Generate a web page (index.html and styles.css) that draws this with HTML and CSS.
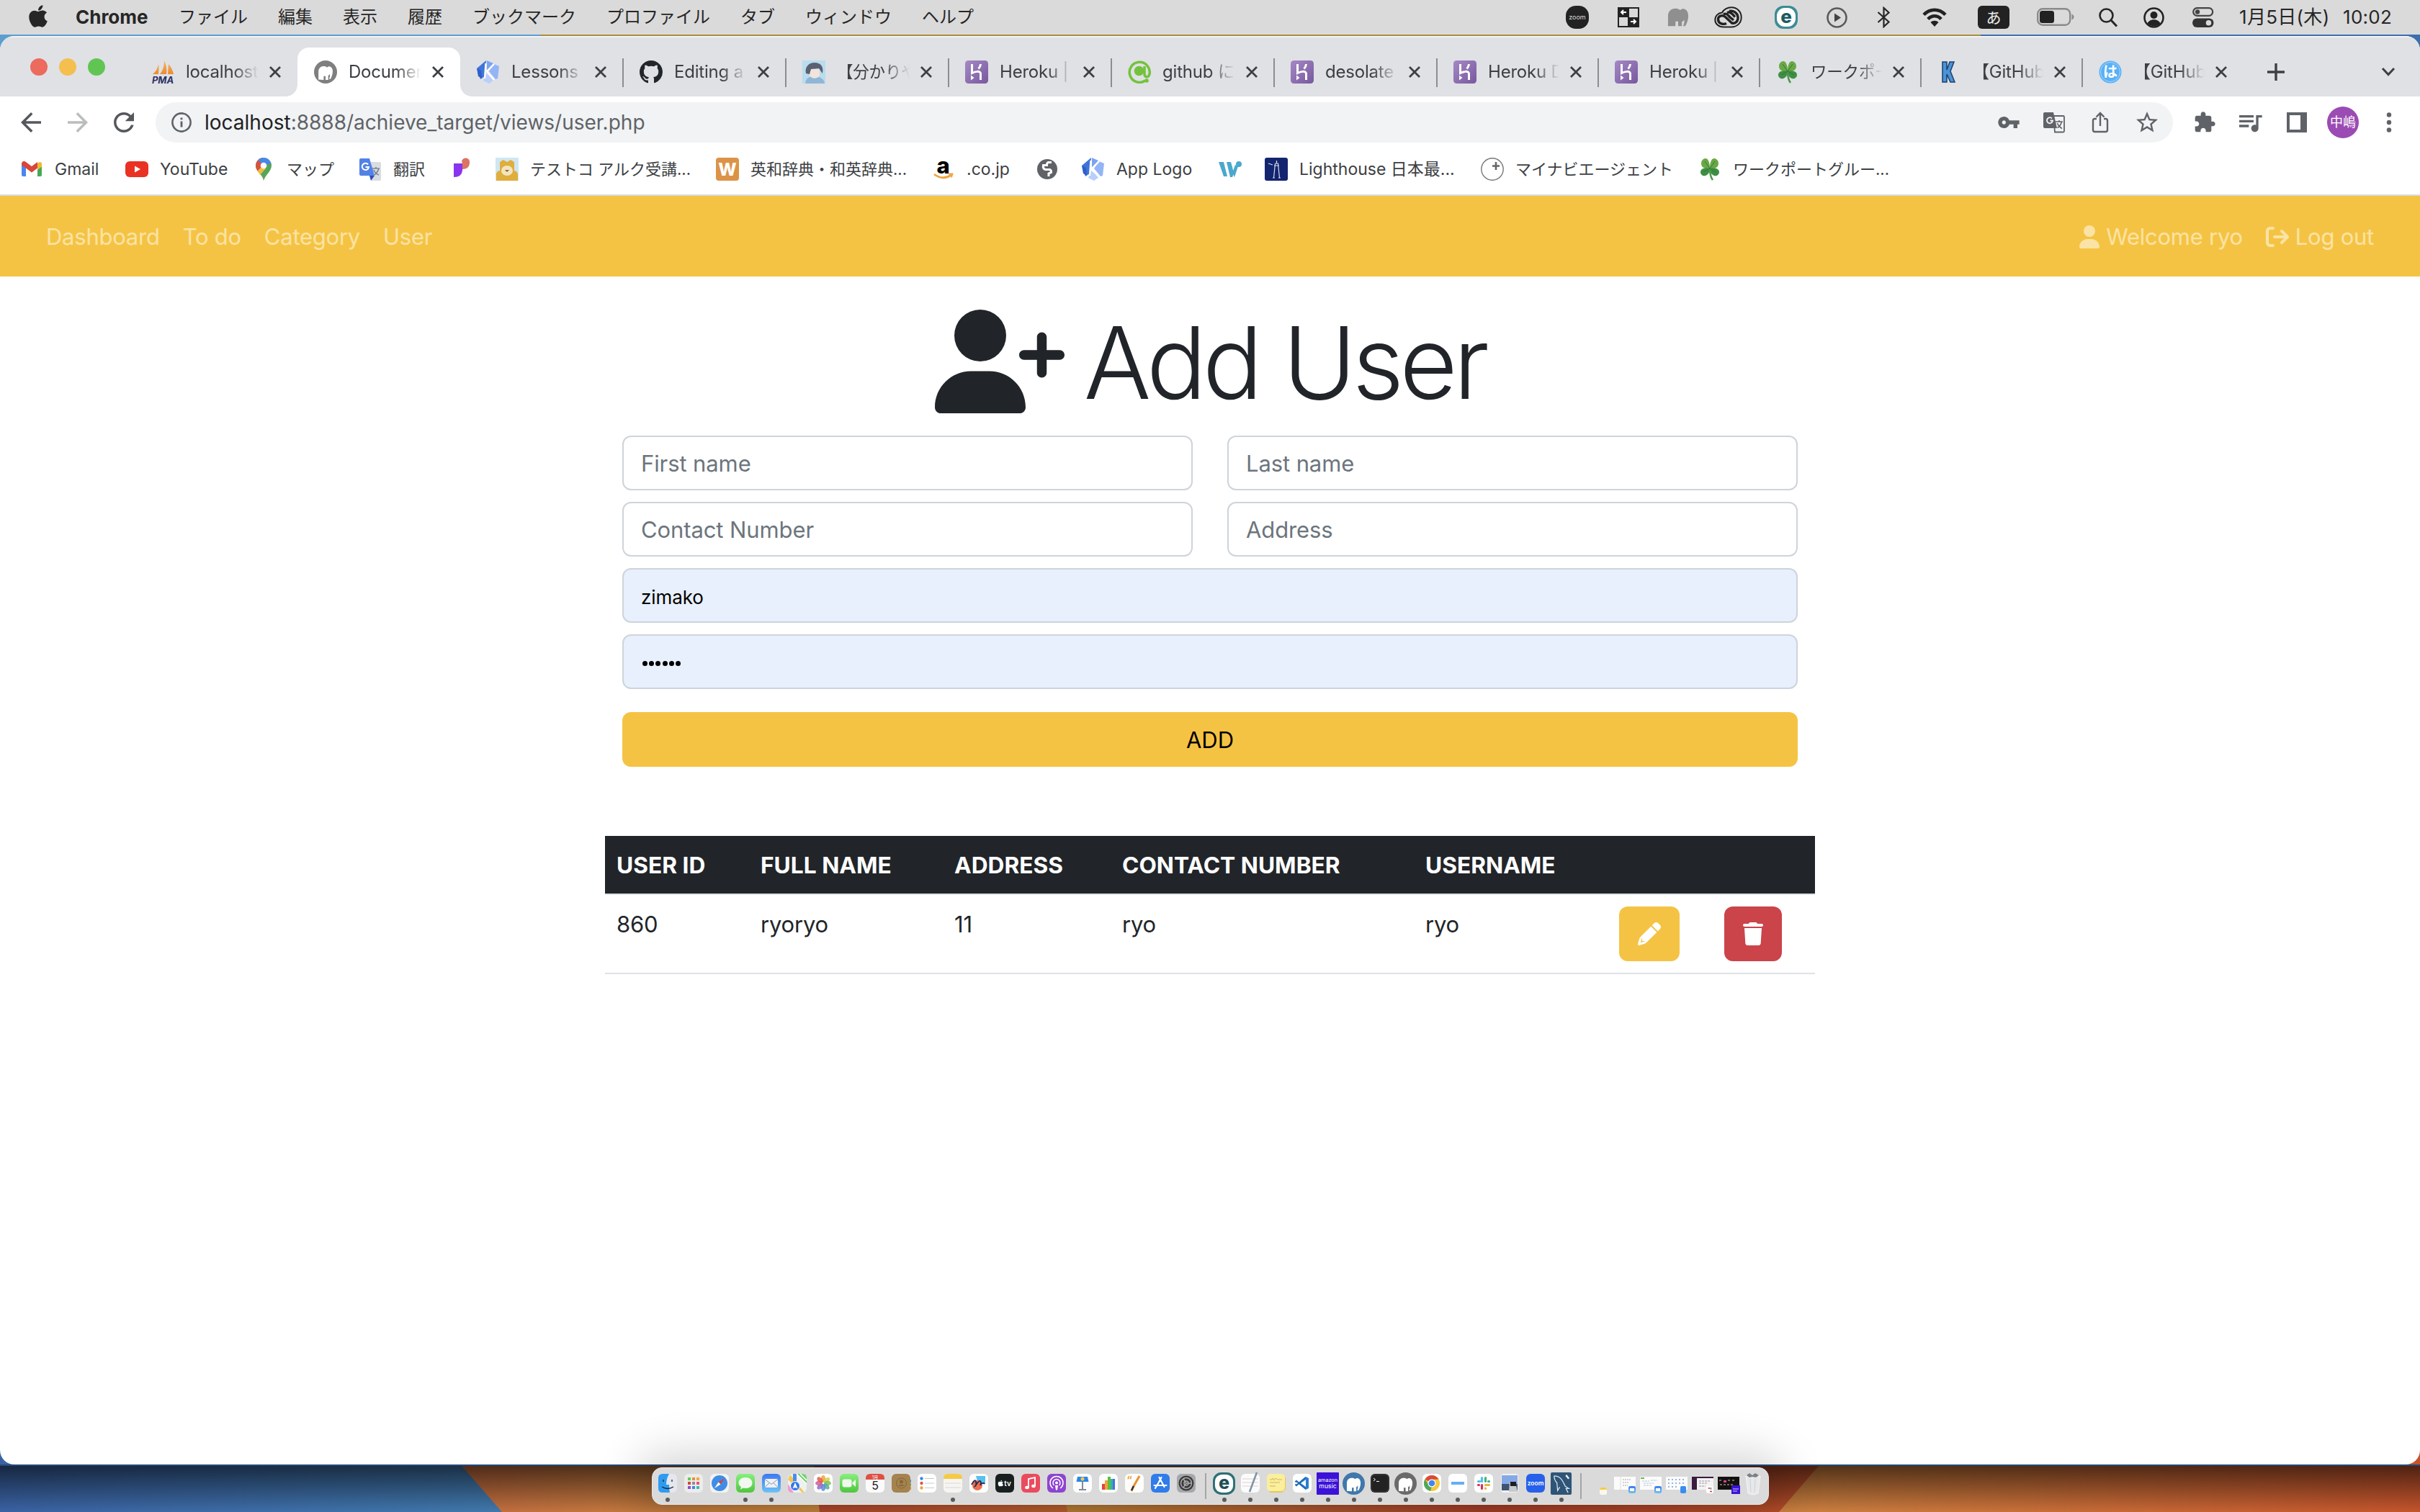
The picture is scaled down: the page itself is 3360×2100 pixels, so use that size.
FILE: index.html
```html
<!DOCTYPE html>
<html lang="ja">
<head>
<meta charset="utf-8">
<title>Document</title>
<link rel="stylesheet" href="styles.css">
</head>
<body>
<svg class="defs" width="0" height="0">
  <defs>
    <linearGradient id="gHeroku" x1="0" y1="0" x2="1" y2="1"><stop offset="0" stop-color="#a489c4"/><stop offset="1" stop-color="#79589f"/></linearGradient>
    <linearGradient id="gGreen" x1="0" y1="0" x2="0" y2="1"><stop offset="0" stop-color="#86f07c"/><stop offset="1" stop-color="#4fc53f"/></linearGradient>
    <linearGradient id="gBlue" x1="0" y1="0" x2="0" y2="1"><stop offset="0" stop-color="#3d78f0"/><stop offset="1" stop-color="#6cc4f5"/></linearGradient>
    <linearGradient id="gSail" x1="0" y1="0" x2="0" y2="1"><stop offset="0" stop-color="#f3b562"/><stop offset="1" stop-color="#ee8a2f"/></linearGradient>
    <symbol id="close" viewBox="0 0 18 18"><path d="M2 2l14 14M16 2L2 16" stroke="#3c4043" stroke-width="2.800" fill="none"/></symbol>
    <symbol id="heroku" viewBox="0 0 32 32"><rect width="32" height="32" rx="4.500" fill="url(#gHeroku)"/><path d="M9.500 5v12.500c4-2 12-4 12 1V27M21.500 5c-.2 3-1.500 5-3 6.500" stroke="#fff" stroke-width="3" fill="none"/><path d="M8 20.500l4.500 3.500L8 27.500z" fill="#fff"/></symbol>
    <symbol id="kicon" viewBox="0 0 32 32"><path d="M13 0L11 22 5 26 0 11z" fill="#3f74d8"/><path d="M0 11l6 3 1 11-5-3z" fill="#2c5fc9"/><path d="M14 0l9 4-9 10z" fill="#7ba4f0"/><path d="M24 5l7 3-2 17-3 1-9-11z" fill="#93b4f6"/><path d="M13 18l11 9-7 5-8-4z" fill="#b9cefb"/><path d="M12.500 4L11 25M24 5L14 15l10 12" stroke="#fff" stroke-width="2.400" fill="none"/></symbol>
    <symbol id="elephant" viewBox="0 0 32 32"><path d="M1 29V14C1 7 6 3 12 3c3.500 0 6 1 7 2.500C23 1.500 29 4 30.500 10c1.500 6-.5 13-4 19h-3c1.500-4 2-7 1.500-9.500-1 2-2 3-3.500 3V29H16v-7h-4v7z"/></symbol>
    <symbol id="mamp" viewBox="0 0 32 32"><circle cx="16" cy="16" r="16"/><g transform="translate(5.500 6) scale(.66)"><path fill="#fff" d="M1 31V14C1 7 6 3 12 3c3.500 0 6 1 7 2.500C23 1.500 29 4 30.500 10c1.500 6-.5 13-4 20h-3c1.500-4 2-8 1.500-10.500-1 2-2 3-3.500 3V32H16v-8h-4v8z"/></g></symbol>
    <symbol id="clover" viewBox="0 0 32 32"><path d="M16 15C10 16 4 14 4 8c0-4 3-7 6-7s6 4 6 14c0-10 3-14 6-14s6 3 6 7c0 6-6 8-12 7z" fill="#6aa845"/><path d="M16 15C10 13 3 15 3 20c0 4 4 6 7 5s6-4 6-10c0 6 3 9 6 10s7-1 7-5c0-5-7-7-13-5z" fill="#3f8f45"/><path d="M16 15c0 7 1 12 4 16" stroke="#4b9947" stroke-width="2.500" fill="none"/><path d="M16 15L9 5M16 15l7-10M16 15l-9 5M16 15l9 5" stroke="#2c7a38" stroke-width="1"/></symbol>
    <symbol id="apple" viewBox="0 0 384 512"><path d="M318.700 268.700c-.2-36.700 16.400-64.400 50-84.800-18.800-26.900-47.200-41.700-84.700-44.600-35.500-2.800-74.300 20.700-88.500 20.700-15 0-49.400-19.700-76.400-19.700C63.300 141.200 4 184.800 4 273.500q0 39.300 14.400 81.200c12.800 36.700 59 126.700 107.200 125.200 25.200-.6 43-17.900 75.800-17.900 31.800 0 48.300 17.900 76.400 17.900 48.600-.7 90.400-82.500 102.600-119.300-65.200-30.700-61.700-90-61.700-91.900zm-56.600-164.200c27.300-32.400 24.800-61.900 24-72.500-24.100 1.400-52 16.400-67.900 34.900-17.500 19.800-27.800 44.300-25.600 71.900 26.100 2 49.900-11.400 69.500-34.300z"/></symbol>
    <symbol id="miniMail" viewBox="0 0 10 10"><rect width="10" height="10" rx="2.500" fill="url(#gBlue)"/><rect x="2" y="3" width="6" height="4" fill="#fff"/></symbol>
  </defs>
</svg>
<div class="desktop">
  <svg class="wallpaper" viewBox="0 0 3360 2100" preserveAspectRatio="none">
    <defs>
      <linearGradient id="wBlue" x1="0" x2="1"><stop offset="0" stop-color="#3a62a3"/><stop offset="1" stop-color="#4179ad"/></linearGradient>
      <linearGradient id="wOr1" x1="0" x2="1"><stop offset="0" stop-color="#c2683f"/><stop offset="1" stop-color="#c78b3e"/></linearGradient>
      <linearGradient id="wRed" x1="0" x2="1"><stop offset="0" stop-color="#b3482c"/><stop offset="1" stop-color="#b8612f"/></linearGradient>
      <linearGradient id="wOr2" x1="0" x2="1"><stop offset="0" stop-color="#b98138"/><stop offset=".55" stop-color="#a53e27"/><stop offset="1" stop-color="#b9502a"/></linearGradient>
      <linearGradient id="wOr3" x1="0" x2="1"><stop offset="0" stop-color="#cc8140"/><stop offset="1" stop-color="#c4542c"/></linearGradient>
    </defs>
    <path d="M0 0h3360v100H0z" fill="#5b9fd0"/>
    <path d="M750 0h2000v60H750z" fill="#a98f3c"/>
    <path d="M2750 0h610v100h-610z" fill="#3c6fae"/>
    <path d="M0 1900h720v200H0z" fill="url(#wBlue)"/>
    <path d="M566 1950h624v150H697z" fill="url(#wOr1)"/>
    <path d="M1120 1950h380v150h-362z" fill="url(#wRed)"/>
    <path d="M1455 1950h1100v150H1482z" fill="url(#wOr2)"/>
    <path d="M2573 1980h787v120h-890z" fill="url(#wOr3)"/>
  </svg>

  <header class="menubar">
    <svg class="apple" fill="#262626"><use href="#apple"/></svg>
    <nav class="menus">
      <span class="menu app">Chrome</span><span class="menu">ファイル</span><span class="menu">編集</span><span class="menu">表示</span><span class="menu">履歴</span><span class="menu">ブックマーク</span><span class="menu">プロファイル</span><span class="menu">タブ</span><span class="menu">ウィンドウ</span><span class="menu">ヘルプ</span>
    </nav>
    <div class="status">
      <svg width="32" height="32" viewBox="0 0 32 32"><rect width="32" height="32" rx="14" fill="#222"/><text x="16" y="18.500" text-anchor="middle" font-size="9" fill="#ddd" class="glyph">zoom</text></svg>
      <svg width="30" height="28" viewBox="0 0 30 28"><rect x="1" y="1" width="28" height="26" fill="#222" stroke="#222" stroke-width="2"/><path d="M16 2h12v12H16zM2 14h12v12H2z" fill="#dadada"/><path d="M5 7h7M8 4L5 7l3 3M18 20h7M22 17l3 3-3 3" stroke="#fff" stroke-width="2" fill="none"/></svg>
      <svg width="32" height="30" fill="#8f8f8f"><use href="#elephant"/></svg>
      <svg width="39" height="30" viewBox="0 0 39 30"><path d="M13 28.500C6 28.500 1.300 24 1.300 18.500S5.500 9 11 8.500C14 3.500 19 1.300 24 1.300c8 0 13.700 6 13.700 13.700S32 28.500 24 28.500z" fill="none" stroke="#222" stroke-width="2"/><path d="M17 23.500c-4 2-11 .5-11.500-5s6-7.500 10-4l9 8.500c5 1.500 9-3 8.500-8C32.500 9 26.500 5 21 6.500M13 11c4-2.500 6 1 9 4l5 4M18 8.500c5-2 8 3 11 6" stroke="#222" stroke-width="3.400" fill="none"/></svg>
      <svg width="32" height="32" viewBox="0 0 32 32"><rect width="32" height="32" rx="12" fill="#3c8c95"/><rect x="3" y="3" width="26" height="26" rx="11" fill="#fff"/><text x="16" y="24" text-anchor="middle" font-size="26" font-weight="800" fill="#1e5a61" class="glyph">e</text></svg>
      <svg width="29" height="29" viewBox="0 0 29 29"><circle cx="14.500" cy="14.500" r="13" fill="none" stroke="#5a5a5a" stroke-width="2.600"/><path d="M11 8.500v12l9-6z" fill="#444"/></svg>
      <svg width="19" height="30" viewBox="0 0 19 30"><path d="M1.500 8l15 13.500L9.500 28V2l7 6.500L1.500 22" stroke="#262626" stroke-width="2.200" fill="none"/></svg>
      <svg width="34" height="26" viewBox="0 0 34 26"><g fill="none" stroke="#222" stroke-width="4.600"><path d="M2 9.500c8.500-9 21.500-9 30 0"/><path d="M7.800 15.500c5.500-5.600 13-5.600 18.400 0"/></g><path d="M17 26l-5.500-6c3-3 8-3 11 0z" fill="#222"/></svg>
      <svg width="44" height="32" viewBox="0 0 44 32"><rect width="44" height="32" rx="6" fill="#222"/><text x="22" y="24" text-anchor="middle" font-size="21" fill="#e8e8e8" class="glyph">あ</text></svg>
      <svg width="52" height="26" viewBox="0 0 52 26"><rect x="1.200" y="1.200" width="45" height="22.600" rx="7" fill="none" stroke="#8a8a8a" stroke-width="2.400"/><rect x="4" y="4" width="20" height="17" rx="3.500" fill="#222"/><path d="M48.500 8.500c4 1.500 4 6.500 0 8z" fill="#8a8a8a"/></svg>
      <svg width="27" height="27" viewBox="0 0 27 27"><circle cx="10.500" cy="10.500" r="9" fill="none" stroke="#262626" stroke-width="2.600"/><path d="M17 17l8 8.500" stroke="#262626" stroke-width="3"/></svg>
      <svg width="29" height="29" viewBox="0 0 29 29"><circle cx="14.500" cy="14.500" r="13" fill="none" stroke="#222" stroke-width="2.600"/><circle cx="14.500" cy="11" r="5" fill="#222"/><path d="M5.500 22.500c3-7 15-7 18 0-4 5-14 5-18 0z" fill="#222"/></svg>
      <svg width="30" height="28" viewBox="0 0 30 28"><rect x="1.200" y="1.200" width="27" height="10.600" rx="5.300" fill="none" stroke="#444" stroke-width="2.200"/><circle cx="7" cy="6.500" r="3.200" fill="#444"/><rect y="15.500" width="29.500" height="12.500" rx="6.200" fill="#333"/><circle cx="22.500" cy="21.700" r="3.800" fill="#dadada"/></svg>
      <span class="date">1月5日(木)</span>
      <span class="time">10:02</span>
    </div>
  </header>

  <main class="window">
    <div class="tabstrip">
      <div class="lights"><i class="red"></i><i class="yellow"></i><i class="green"></i></div>
      <div class="tab"><svg class="fav" viewBox="0 0 32 32"><path d="M2 19C7 15 9 10 10 5c1 5 0 10 0 14zM12 19C16 14 18 8 18 0c3 6 4 13 3 19zM23 19l1-14c4 5 6 9 7 14z" fill="url(#gSail)"/><text x="16" y="31.500" text-anchor="middle" font-size="13" font-weight="700" font-style="italic" fill="#2d3064" class="glyph">PMA</text></svg><span class="label">localhost</span><svg class="x"><use href="#close"/></svg></div>
      <div class="tab active"><svg class="fav" fill="#7f7f7f"><use href="#mamp"/></svg><span class="label">Document</span><svg class="x"><use href="#close"/></svg></div>
      <div class="tab"><svg class="fav"><use href="#kicon"/></svg><span class="label">Lessons</span><svg class="x"><use href="#close"/></svg></div>
      <div class="tab sep"><svg class="fav" viewBox="0 0 16 16"><path fill="#22262b" d="M8 0C3.580 0 0 3.580 0 8c0 3.540 2.290 6.530 5.470 7.590.4.070.55-.17.55-.38 0-.19-.01-.82-.01-1.490-2.010.37-2.530-.49-2.690-.94-.09-.23-.48-.94-.82-1.130-.28-.15-.68-.52-.01-.53.630-.01 1.080.58 1.230.82.720 1.210 1.870.87 2.330.66.070-.52.280-.87.510-1.070-1.780-.2-3.640-.89-3.640-3.950 0-.87.310-1.590.820-2.150-.08-.2-.36-1.020.080-2.120 0 0 .67-.21 2.200.82.640-.18 1.320-.27 2-.27s1.360.090 2 .27c1.530-1.040 2.200-.82 2.200-.82.440 1.100.160 1.920.080 2.120.510.560.820 1.270.820 2.150 0 3.070-1.870 3.750-3.650 3.950.290.250.540.730.540 1.480 0 1.070-.01 1.930-.01 2.200 0 .21.150.460.550.380A8.010 8.010 0 0 0 16 8c0-4.420-3.580-8-8-8z"/></svg><span class="label">Editing a</span><svg class="x"><use href="#close"/></svg></div>
      <div class="tab sep"><svg class="fav" viewBox="0 0 32 32"><path d="M0 0h32v32H0z" fill="#b9dcee"/><path d="M4 32c1-8 6-10 12-10s14 2 15 10z" fill="#8fb6d6"/><path d="M9 12h15v9c-3 5-11 5-14 0z" fill="#f2e3dc"/><path d="M5 18C3 9 9 3 17 3s13 5 11 15l-3-4-2-3-11 1-2 7z" fill="#5b6072"/></svg><span class="label ja">【分かりや</span><svg class="x"><use href="#close"/></svg></div>
      <div class="tab sep"><svg class="fav"><use href="#heroku"/></svg><span class="label">Heroku | L</span><svg class="x"><use href="#close"/></svg></div>
      <div class="tab sep"><svg class="fav" viewBox="0 0 32 32"><path d="M24 28a14 14 0 1 1 6-9c-2 6-7 4-7 0V8" stroke="#74c23b" stroke-width="3.500" fill="none"/><circle cx="15.500" cy="14.500" r="6.800" fill="#74c23b"/><circle cx="26" cy="28" r="2.800" fill="#74c23b"/></svg><span class="label">github に</span><svg class="x"><use href="#close"/></svg></div>
      <div class="tab sep"><svg class="fav"><use href="#heroku"/></svg><span class="label">desolate</span><svg class="x"><use href="#close"/></svg></div>
      <div class="tab sep n"><svg class="fav"><use href="#heroku"/></svg><span class="label">Heroku D</span><svg class="x"><use href="#close"/></svg></div>
      <div class="tab sep n"><svg class="fav"><use href="#heroku"/></svg><span class="label">Heroku | L</span><svg class="x"><use href="#close"/></svg></div>
      <div class="tab sep n"><svg class="fav"><use href="#clover"/></svg><span class="label ja">ワークポー</span><svg class="x"><use href="#close"/></svg></div>
      <div class="tab sep n"><svg class="fav" viewBox="0 0 32 32"><path d="M7 2h6v11l4-11h6l-5 13 6 15h-6l-5-11v11H7z" fill="#4a93d6" stroke="#1c3f6e" stroke-width="1.500"/></svg><span class="label">【GitHub</span><svg class="x"><use href="#close"/></svg></div>
      <div class="tab sep n"><svg class="fav" viewBox="0 0 32 32"><circle cx="16" cy="16" r="15.500" fill="#58b0f6"/><circle cx="16" cy="16" r="13.500" fill="none" stroke="#a9d6fb" stroke-width="1"/><text x="16" y="23" text-anchor="middle" font-size="20" font-weight="700" fill="#fff" class="glyph">は</text></svg><span class="label">【GitHub</span><svg class="x"><use href="#close"/></svg></div>
      <div class="newtab"><svg width="24" height="24" viewBox="0 0 24 24"><path d="M12 0v24M0 12h24" stroke="#3c4043" stroke-width="3.400"/></svg></div>
      <svg class="more" width="20" height="14" viewBox="0 0 20 14"><path d="M2 2l8 8.500L18 2" stroke="#3c4043" stroke-width="3" fill="none"/></svg>
    </div>

    <div class="toolbar">
      <svg class="tb back" viewBox="0 0 24 24"><path d="M20 11H7.830l5.590-5.590L12 4l-8 8 8 8 1.410-1.410L7.830 13H20v-2z"/></svg>
      <svg class="tb fwd" viewBox="0 0 24 24"><path d="M4 11h12.170l-5.590-5.590L12 4l8 8-8 8-1.410-1.410L16.170 13H4v-2z"/></svg>
      <svg class="tb reload" viewBox="0 0 24 24"><path d="M17.650 6.350C16.200 4.900 14.210 4 12 4c-4.420 0-7.990 3.580-7.990 8s3.570 8 7.990 8c3.730 0 6.840-2.550 7.730-6h-2.080c-.82 2.330-3.040 4-5.650 4-3.310 0-6-2.690-6-6s2.690-6 6-6c1.660 0 3.140.69 4.220 1.780L13 11h7V4l-2.350 2.350z"/></svg>
      <div class="omnibox">
        <svg width="28" height="28" viewBox="0 0 28 28"><circle cx="14" cy="14" r="12.600" fill="none" stroke="#5f6368" stroke-width="2.600"/><path d="M12.600 12.500h2.800v8h-2.800zM12.600 7.500h2.800v2.800h-2.800z" fill="#5f6368"/></svg>
        <span class="url"><b>localhost</b>:8888/achieve_target/views/user.php</span>
        <div class="omni-actions">
          <svg width="32" height="32" viewBox="0 0 24 24" fill="#5f6368"><path d="M12.650 10C11.830 7.670 9.610 6 7 6c-3.310 0-6 2.690-6 6s2.690 6 6 6c2.610 0 4.830-1.670 5.650-4H17v4h4v-4h2v-4H12.650zM7 14c-1.100 0-2-.9-2-2s.9-2 2-2 2 .9 2 2-.9 2-2 2z"/></svg>
          <svg width="30" height="30" viewBox="0 0 30 30"><path d="M14 6h13.500q1.500 0 1.500 1.500V27q0 1.500-1.500 1.500H16z" fill="none" stroke="#5f6368" stroke-width="1.800"/><path d="M2 1h12l5 22H2q-2 0-2-2V3q0-2 2-2z" fill="#5f6368"/><path d="M12 9.500a4 4 0 1 0 1 3H9.500" stroke="#f1f3f4" stroke-width="1.900" fill="none"/><path d="M17 14h10M22 12v2M25.500 14c-1 4-3 7-6 8.500M19.500 16c1 3 4 6 6.500 7.500" stroke="#5f6368" stroke-width="1.600" fill="none"/></svg>
          <svg width="24" height="30" viewBox="0 0 24 30"><path d="M7 10H4.500Q2 10 2 12.500v13Q2 28 4.500 28h15q2.500 0 2.500-2.500v-13Q22 10 19.500 10H17M12 20V3M6.500 7.500L12 2l5.500 5.500" stroke="#5f6368" stroke-width="2.400" fill="none"/></svg>
          <svg width="36" height="36" viewBox="0 0 24 24" fill="#5f6368"><path d="M22 9.240l-7.190-.62L12 2 9.190 8.630 2 9.240l5.460 4.730L5.820 21 12 17.270 18.180 21l-1.630-7.030L22 9.240zM12 15.400l-3.760 2.270 1-4.280-3.320-2.880 4.380-.38L12 6.100l1.710 4.040 4.380.38-3.320 2.880 1 4.280L12 15.400z"/></svg>
        </div>
      </div>
      <div class="actions">
        <svg width="32" height="32" viewBox="0 0 24 24" fill="#5f6368"><path d="M20.500 11H19V7c0-1.100-.9-2-2-2h-4V3.500C13 2.120 11.880 1 10.500 1S8 2.120 8 3.500V5H4c-1.100 0-1.990.9-1.990 2v3.800H3.500c1.490 0 2.700 1.210 2.700 2.700s-1.210 2.700-2.700 2.700H2V20c0 1.100.9 2 2 2h3.800v-1.500c0-1.490 1.210-2.700 2.700-2.700 1.490 0 2.700 1.210 2.700 2.700V22H17c1.100 0 2-.9 2-2v-4h1.500c1.380 0 2.500-1.120 2.500-2.500S21.880 11 20.500 11z"/></svg>
        <svg width="40" height="40" viewBox="0 0 24 24" fill="#5f6368"><path d="M15 6H3v2h12V6zm0 4H3v2h12v-2zM3 16h8v-2H3v2zM17 6v8.180c-.31-.11-.65-.18-1-.18-1.660 0-3 1.340-3 3s1.340 3 3 3 3-1.340 3-3V8h3V6h-5z"/></svg>
        <svg width="28" height="28" viewBox="0 0 28 28"><path fill="#5f6368" fill-rule="evenodd" d="M0 0h28v28H0zM4 4h15v20H4z"/></svg>
        <span class="avatar">中嶋</span>
        <svg width="8" height="28" viewBox="0 0 8 28" fill="#5f6368"><circle cx="4" cy="3.500" r="3.200"/><circle cx="4" cy="14" r="3.200"/><circle cx="4" cy="24.500" r="3.200"/></svg>
      </div>
    </div>

    <div class="bookmarks">
      <a><svg class="bi" viewBox="0 0 32 32"><path d="M2 7v17q0 2 2 2h4V13z" fill="#4b87ee"/><path d="M30 7v17q0 2-2 2h-4V13z" fill="#4aa757"/><path d="M24 8v9l6-4.500V8q-2-4-6 0z" fill="#f1b932"/><path d="M2 7.500Q4 3 8 6l8 6 8-6v8.500l-8 6-8-6-6-4z" fill="#d8473a"/></svg><span>Gmail</span></a>
      <a><svg class="bi" viewBox="0 0 32 32"><rect y="5" width="32" height="22" rx="6" fill="#e93223"/><path d="M13 11.500v9l8-4.500z" fill="#fff"/></svg><span>YouTube</span></a>
      <a><svg class="bi" viewBox="0 0 32 32"><path d="M16 32C15 24 5 20 5 11h11z" fill="#f0bd42"/><path d="M5 11a11 11 0 0 1 22 0c0 8-9 13-11 21 0-8-11-13-11-21z" fill="#54a65a"/><path d="M5 11A11 11 0 0 1 14 .2L16 11l-8 8Q5 15 5 11z" fill="#d95040"/><path d="M8 3.500A11 11 0 0 1 26.500 8L16 11z" fill="#4a86e8"/><path d="M8 18l9-9 2 6-8 9z" fill="#f0bd42"/><circle cx="16" cy="11" r="4.300" fill="#fff"/></svg><span class="ja">マップ</span></a>
      <a><svg class="bi" viewBox="0 0 32 32"><path d="M12 6h17q2 0 2 2v22q0 2-2 2H18z" fill="#d9dce0"/><path d="M3 1h12l7 24H3q-2 0-2-2V3q0-2 2-2z" fill="#5282e8"/><path d="M15 25h7l-5 7z" fill="#2d50b5"/><path d="M13 9.500a4.600 4.600 0 1 0 1 3.500H9.500" stroke="#fff" stroke-width="2" fill="none"/><path d="M19 15h10M24 13v2M28 15c-1 4-4 7-6 9M21 17c1 3 4 6 7 7" stroke="#7a8694" stroke-width="1.700" fill="none"/></svg><span class="ja">翻訳</span></a>
      <a><svg class="bi" viewBox="0 0 32 32"><path d="M5 8h12v10q-1 9-12 9z" fill="#8a34f0"/><path d="M16 5a5.500 5.500 0 0 1 11 2c0 5-3 9-10 9V8z" fill="#dd7266"/></svg></a>
      <a><svg class="bi" viewBox="0 0 32 32"><path d="M0 0h32v32H0z" fill="#cfe6f3"/><path d="M1 32V22q2-4 5-4V6l5-3 5 3 5-3 5 3v12q5 1 5 6v8z" fill="#dfae3c"/><ellipse cx="16" cy="18" rx="8" ry="7" fill="#f3e4c0"/><path d="M13 17h6l-3 3z" fill="#8a6a2a"/></svg><span class="ja">テストコ アルク受講...</span></a>
      <a><svg class="bi" viewBox="0 0 32 32"><rect width="32" height="32" rx="4" fill="#dc9347"/><text x="16" y="24.500" text-anchor="middle" font-size="24" font-weight="800" fill="#fff" class="glyph">W</text></svg><span class="ja">英和辞典・和英辞典...</span></a>
      <a><svg class="bi" viewBox="0 0 32 32"><text x="15.500" y="21.500" text-anchor="middle" font-size="31" font-weight="800" fill="#000" class="glyph">a</text><path d="M3 23q12 9 24 1" stroke="#f0a33c" stroke-width="2.800" fill="none"/><path d="M23 22.500l5.500 0-1.500 5" stroke="#f0a33c" stroke-width="1.800" fill="none"/></svg><span>.co.jp</span></a>
      <a><svg class="bi" viewBox="0 0 32 32"><circle cx="16" cy="16" r="14" fill="#5f6368"/><path d="M22 6.500h-4.500q-2 .5-2 4h-5q-1 5 3 6h6q2.500 1 2 4l-3.500 1.500v4" stroke="#fff" stroke-width="3" fill="none"/></svg></a>
      <a><svg class="bi"><use href="#kicon"/></svg><span>App Logo</span></a>
      <a><svg class="bi" viewBox="0 0 32 32"><path d="M0 6h7l5 20H7zM11 6h6l2 7 2 9-2 5h-3z" fill="#4ba8cc"/><path d="M19 21l4-11 4 2-5 15z" fill="#4ba8cc"/><circle cx="28" cy="9" r="4" fill="#4ba8cc"/></svg></a>
      <a><svg class="bi" viewBox="0 0 32 32"><rect width="32" height="32" rx="3" fill="#14256f"/><path d="M14.500 8h4l2 20M14.500 8l-2 20M13 11h7M16.500 4v4M11 28h3M19 28h3M5 8l6 2" stroke="#d9deee" stroke-width="1.200" fill="none"/></svg><span>Lighthouse 日本最...</span></a>
      <a><svg class="bi" viewBox="0 0 32 32"><circle cx="16" cy="16" r="15.200" fill="#fff" stroke="#777" stroke-width="1.400"/><path d="M21 6v11M16 11.500h10" stroke="#666" stroke-width="2.600"/></svg><span class="ja">マイナビエージェント</span></a>
      <a><svg class="bi"><use href="#clover"/></svg><span class="ja">ワークポートグルー...</span></a>
    </div>

    <section class="page">
      <nav class="navbar">
        <div class="nav-group"><a>Dashboard</a><a>To do</a><a>Category</a><a>User</a></div>
        <div class="nav-group"><a><svg width="28" height="32" viewBox="0 0 448 512"><path d="M224 256A128 128 0 1 0 224 0a128 128 0 1 0 0 256zm-45.700 48C79.800 304 0 383.800 0 482.300C0 498.700 13.300 512 29.700 512H418.300c16.400 0 29.700-13.300 29.700-29.700C448 383.800 368.200 304 269.700 304H178.300z"/></svg>Welcome ryo</a><a><svg width="32" height="32" viewBox="0 0 512 512"><path d="M502.600 278.600c12.500-12.500 12.500-32.800 0-45.300l-128-128c-12.500-12.500-32.800-12.500-45.300 0s-12.500 32.800 0 45.300L402.700 224 192 224c-17.700 0-32 14.300-32 32s14.300 32 32 32l210.700 0-73.400 73.400c-12.500 12.500-12.500 32.800 0 45.300s32.800 12.500 45.300 0l128-128zM160 96c17.700 0 32-14.300 32-32s-14.300-32-32-32L96 32C43 32 0 75 0 128L0 384c0 53 43 96 96 96l64 0c17.700 0 32-14.300 32-32s-14.300-32-32-32l-64 0c-17.700 0-32-14.300-32-32l0-256c0-17.700 14.300-32 32-32l64 0z"/></svg>Log out</a></div>
      </nav>
      <div class="container">
        <h1 class="title"><svg width="180" height="144" viewBox="0 0 640 512"><path d="M96 128a128 128 0 1 1 256 0A128 128 0 1 1 96 128zM0 482.300C0 383.800 79.800 304 178.300 304h91.400C368.200 304 448 383.800 448 482.300c0 16.400-13.300 29.700-29.700 29.700H29.700C13.300 512 0 498.700 0 482.300zM504 312V248H440c-13.300 0-24-10.700-24-24s10.700-24 24-24h64V136c0-13.300 10.700-24 24-24s24 10.700 24 24v64h64c13.300 0 24 10.700 24 24s-10.700 24-24 24H552v64c0 13.300-10.700 24-24 24s-24-10.700-24-24z"/></svg><span>Add User</span></h1>
        <form class="form">
          <div class="field">First name</div><div class="field">Last name</div>
          <div class="field">Contact Number</div><div class="field">Address</div>
          <div class="field wide filled">zimako</div>
          <div class="field wide filled"><span class="dots"><i></i><i></i><i></i><i></i><i></i><i></i></span></div>
          <button type="button" class="add wide">ADD</button>
        </form>
        <div class="table">
          <div class="row head"><span>USER ID</span><span>FULL NAME</span><span>ADDRESS</span><span>CONTACT NUMBER</span><span>USERNAME</span><span></span><span></span></div>
          <div class="row"><span>860</span><span>ryoryo</span><span>11</span><span>ryo</span><span>ryo</span>
            <span><button type="button" class="btn edit"><svg width="32" height="32" viewBox="0 0 512 512"><path d="M421.700 220.300L188.500 453.400L154.600 419.500L158.100 416H112C103.200 416 96 408.800 96 400V353.900L92.500 357.400C87.800 362.200 84.300 368 82.400 374.400L59.400 452.600L137.600 429.600C143.100 427.700 149.800 424.200 154.600 419.500L188.500 453.400C178.100 463.800 165.200 471.500 151.100 475.600L30.800 511C22.400 513.500 13.200 511.200 7 505C.8 498.800-1.500 489.700 1 481.200L36.400 360.900C40.500 346.800 48.200 333.900 58.600 323.500L291.700 90.300L421.700 220.300zM492.700 58.700C517.700 83.700 517.700 124.300 492.700 149.300L444.300 197.700L314.300 67.700L362.700 19.300C387.700-5.700 428.300-5.700 453.300 19.300L492.700 58.700z"/></svg></button></span>
            <span><button type="button" class="btn del"><svg width="28" height="32" viewBox="0 0 448 512"><path d="M135.200 17.700L128 32H32C14.300 32 0 46.300 0 64S14.300 96 32 96H416c17.700 0 32-14.300 32-32s-14.300-32-32-32H320l-7.200-14.300C307.400 6.800 296.300 0 284.200 0H163.800c-12.100 0-23.200 6.800-28.600 17.700zM416 128H32L53.200 467c1.600 25.300 22.600 45 47.900 45H346.900c25.300 0 46.300-19.700 47.900-45L416 128z"/></svg></button></span>
          </div>
        </div>
      </div>
    </section>
  </main>

  <footer class="dock-zone">
    <div class="dock">
      <div class="apps">
        <span class="run"><svg viewBox="0 0 26 26"><rect width="26" height="26" rx="6" fill="#e4e8ee"/><path d="M6 0h9q-4 7-4 15h4q0 6 1 11H6q-6 0-6-6V6q0-6 6-6z" fill="#2f9bf0"/><path d="M7 8v3M19 8v3M5 18q8 5 16 0" stroke="#223" stroke-width="1.300" fill="none"/></svg></span>
        <span><svg viewBox="0 0 26 26"><rect width="26" height="26" rx="6" fill="#ececec"/><path d="M5 5h4v4H5z" fill="#5fce4f"/><path d="M11 5h4v4h-4z" fill="#f08b3a"/><path d="M17 5h4v4h-4z" fill="#f3a83c"/><path d="M5 11h4v4H5z" fill="#d8443c"/><path d="M11 11h4v4h-4z" fill="#8b8f94"/><path d="M17 11h4v4h-4z" fill="#e8547a"/><path d="M5 17h4v4H5z" fill="#8a4fd0"/><path d="M11 17h4v4h-4z" fill="#3f86e8"/><path d="M17 17h4v4h-4z" fill="#42b8a0"/></svg></span>
        <span><svg viewBox="0 0 26 26"><rect width="26" height="26" rx="6" fill="#f3f3f3"/><circle cx="13" cy="13" r="11" fill="#3f8de6"/><path d="M20 6l-5.500 8.500-3-3z" fill="#d8443c"/><path d="M6 20l5.500-8.500 3 3z" fill="#fff"/></svg></span>
        <span class="run"><svg viewBox="0 0 26 26"><rect width="26" height="26" rx="6" fill="url(#gGreen)"/><path d="M13 5c6 0 9.500 3.500 9.500 7.700S19 20 13 20q-1.500 0-3-.5L6 21.500l1-3.500c-2-1.500-3.500-3-3.500-5.300C3.500 8.500 7 5 13 5z" fill="#f1f8f0"/></svg></span>
        <span class="run"><svg viewBox="0 0 26 26"><rect width="26" height="26" rx="6" fill="url(#gBlue)"/><rect x="4" y="7" width="18" height="12" rx="1.500" fill="#eef1f5"/><path d="M4 7.500l9 7 9-7M4 18.500l6.500-6M22 18.500l-6.500-6" stroke="#8b97a5" fill="none"/></svg></span>
        <span><svg viewBox="0 0 26 26"><rect width="26" height="26" rx="6" fill="#eef1ee"/><path d="M12 0h8q6 0 6 6v8z" fill="#70cf6a"/><path d="M0 14l8 12H6q-6 0-6-6z" fill="#f09ad0"/><path d="M0 8l20 18h3L3 1z" fill="#f3c752"/><path d="M7 0h5v12H7z" fill="#4a8cf0"/><path d="M12 0l14 14M17 0l9 9" stroke="#fff" stroke-width="1.500"/><circle cx="10" cy="17" r="6.500" fill="#3478e8" stroke="#fff"/><path d="M10 12l3.500 8.500L10 19l-3.500 1.500z" fill="#fff"/></svg></span>
        <span><svg viewBox="0 0 26 26"><rect width="26" height="26" rx="6" fill="#fff"/><g fill-opacity=".85"><ellipse cx="13" cy="7" rx="3.200" ry="5" fill="#f0a33c"/><ellipse cx="18" cy="9" rx="3.200" ry="5" transform="rotate(45 18 9)" fill="#cfd044"/><ellipse cx="19" cy="13" rx="5" ry="3.200" fill="#7fc15a"/><ellipse cx="17.500" cy="17.500" rx="3.200" ry="5" transform="rotate(-45 17.500 17.500)" fill="#4fae9c"/><ellipse cx="13" cy="19" rx="3.200" ry="5" fill="#5a8de0"/><ellipse cx="8.500" cy="17.500" rx="3.200" ry="5" transform="rotate(45 8.500 17.500)" fill="#8e6cc9"/><ellipse cx="7" cy="13" rx="5" ry="3.200" fill="#c9609c"/><ellipse cx="8.500" cy="8.500" rx="3.200" ry="5" transform="rotate(-45 8.500 8.500)" fill="#e35b45"/></g></svg></span>
        <span><svg viewBox="0 0 26 26"><rect width="26" height="26" rx="6" fill="url(#gGreen)"/><rect x="3.500" y="7.500" width="13" height="11" rx="3" fill="#f1f8f0"/><path d="M17.500 12l4.500-4v10l-4.500-4z" fill="#f1f8f0"/></svg></span>
        <span><svg viewBox="0 0 26 26"><rect width="26" height="26" rx="6" fill="#fbfbfb"/><path d="M0 8V6q0-6 6-6h14q6 0 6 6v2z" fill="#dd5145"/><text x="13" y="6.600" text-anchor="middle" font-size="6" fill="#fff" class="glyph">1月</text><text x="13" y="22" text-anchor="middle" font-size="16" fill="#222" class="glyph">5</text></svg></span>
        <span><svg viewBox="0 0 26 26"><path d="M23 8h4v4h-4z" fill="#4f8fd8"/><path d="M23 13h4v4h-4z" fill="#5fb850"/><path d="M23 18h4v4h-4z" fill="#ef8b38"/><rect width="26" height="26" rx="6" fill="#a5834f"/><circle cx="13.500" cy="13" r="7" fill="none" stroke="#836538"/><circle cx="13.500" cy="11" r="2.500" fill="#836538"/><path d="M9 17q4.500-4 9 0z" fill="#836538"/></svg></span>
        <span><svg viewBox="0 0 26 26"><rect width="26" height="26" rx="6" fill="#fff"/><circle cx="5.500" cy="6.500" r="2.200" fill="#3b82f0"/><circle cx="5.500" cy="13" r="2.200" fill="#e25547"/><circle cx="5.500" cy="19.500" r="2.200" fill="#f0a33c"/><path d="M10 6.500h13M10 13h13M10 19.500h13" stroke="#c9c9c9"/></svg></span>
        <span class="run"><svg viewBox="0 0 26 26"><rect width="26" height="26" rx="6" fill="#f6f5f2"/><path d="M0 7V6q0-6 6-6h14q6 0 6 6v1z" fill="#f6ca45"/><path d="M2 13h22M2 19h22" stroke="#d9d8d4"/></svg></span>
        <span><svg viewBox="0 0 26 26"><rect width="26" height="26" rx="6" fill="#fff"/><path d="M9 3h13v11H12z" fill="#56c2ee"/><circle cx="11" cy="16" r="7" fill="#ec6f4b"/><path d="M3 15q5-9 6-4t-1 6q5-8 7-7t0 6q3-5 6-2" stroke="#222a55" stroke-width="1.800" fill="none"/></svg></span>
        <span><svg viewBox="0 0 26 26"><rect width="26" height="26" rx="6" fill="#18201f"/><use href="#apple" x="3.500" y="8" width="7.500" height="10" fill="#fff"/><text x="17" y="17" text-anchor="middle" font-size="10" font-weight="600" fill="#fff" class="glyph">tv</text></svg></span>
        <span><svg viewBox="0 0 26 26"><rect width="26" height="26" rx="6" fill="#ea4b5d"/><path d="M10 19V7l9-2v12" stroke="#fff" stroke-width="1.800" fill="none"/><ellipse cx="8" cy="19" rx="2.800" ry="2.200" fill="#fff"/><ellipse cx="17" cy="17" rx="2.800" ry="2.200" fill="#fff"/></svg></span>
        <span><svg viewBox="0 0 26 26"><rect width="26" height="26" rx="6" fill="#8e44d0"/><g fill="none" stroke="#fff" stroke-width="1.500"><path d="M8 20a9 9 0 1 1 10 0"/><path d="M9.500 16a5 5 0 1 1 7 0"/></g><circle cx="13" cy="12.500" r="2" fill="#fff"/><path d="M11 16h4l-1 6.500h-2z" fill="#fff"/></svg></span>
        <span><svg viewBox="0 0 26 26"><rect width="26" height="26" rx="6" fill="#fdfdfd"/><path d="M6 4h14l1.500 7h-17z" fill="#2b86e8"/><circle cx="13" cy="7" r="2.500" fill="#f3c752"/><path d="M13 11v10M8 22h10" stroke="#55677a" stroke-width="1.500"/></svg></span>
        <span><svg viewBox="0 0 26 26"><rect width="26" height="26" rx="6" fill="#fdfdfd"/><path d="M4 14h4v8H4z" fill="#e2453b"/><path d="M8 9h4v13H8z" fill="#f0a33c"/><path d="M12 4h4v18h-4z" fill="#58c13f"/><path d="M16 7h3v15h-3z" fill="#36b4a8"/><path d="M19 7h3v15h-3z" fill="#4a6fe0"/></svg></span>
        <span><svg viewBox="0 0 26 26"><rect width="26" height="26" rx="6" fill="#fdfdfb"/><path d="M20 3L11 19l-2 5" stroke="#e8902f" stroke-width="3" fill="none"/><path d="M12 17l-3 6" stroke="#333" stroke-width="2.500"/><text x="6" y="14" text-anchor="middle" font-size="14" font-weight="700" fill="#f0a33c" class="glyph">“</text></svg></span>
        <span><svg viewBox="0 0 26 26"><rect width="26" height="26" rx="6" fill="#2f7cea"/><path d="M14.500 5L8 17M11.500 5L18.500 18M4.500 16h17M6 20l1-2" stroke="#fff" stroke-width="2.200" fill="none" stroke-linecap="round"/></svg></span>
        <span><svg viewBox="0 0 26 26"><rect width="26" height="26" rx="6" fill="#a5a8ab"/><circle cx="13" cy="13" r="10.500" fill="#3a3a3a"/><circle cx="13" cy="13" r="7.500" fill="none" stroke="#aaa" stroke-width="1.500"/><circle cx="13" cy="13" r="3" fill="none" stroke="#aaa" stroke-width="1.500"/><path d="M13 13l7 0M13 13l-4 6M13 13L9 7" stroke="#aaa" stroke-width="1.500"/></svg></span>
      </div>
      <i class="bar"></i>
      <div class="apps second">
        <span class="run"><svg class="big" viewBox="0 0 32 32"><rect width="32" height="32" rx="12" fill="#2e6f76"/><rect x="3" y="3" width="26" height="26" rx="10" fill="#fff"/><text x="16" y="24" text-anchor="middle" font-size="26" font-weight="800" fill="#1e4f56" class="glyph">e</text></svg></span>
        <span class="run"><svg viewBox="0 0 26 26"><rect width="26" height="26" rx="6" fill="#fbfbfb"/><path d="M2 7h22M2 12h22M2 17h22" stroke="#e3cfd2"/><path d="M22-2L12 25" stroke="#7f93a5" stroke-width="2.500"/></svg></span>
        <span class="run"><svg viewBox="0 0 26 26"><path d="M4 5h22v16l-5 5H4z" fill="#e2c95a"/><rect width="25" height="24" rx="5" fill="#fbee9c"/><path d="M4 8h3l1-2 2 3 2-3 3 2h6M4 12h14M4 17h8" stroke="#cdb863" fill="none"/></svg></span>
        <span class="run"><svg viewBox="0 0 26 26"><rect width="26" height="26" rx="6" fill="#fff"/><path d="M18 4l4 2v14l-4 2-11-9z" fill="#2a7fd0"/><path d="M18 8v10l-7-5z" fill="#fff"/><path d="M18 5L5 16l-1.500-1.500M18 21L5 10l-1.500 1.500" stroke="#1f6bb8" stroke-width="2.200" fill="none"/></svg></span>
        <span class="run"><svg class="big" viewBox="0 0 32 32"><rect width="32" height="32" rx="1" fill="#3b12d8"/><text x="16" y="13" text-anchor="middle" font-size="7.500" fill="#fff" class="glyph">amazon</text><text x="16" y="23" text-anchor="middle" font-size="9" fill="#fff" class="glyph">music</text></svg></span>
        <span class="run"><svg class="big" fill="#3f78ab"><use href="#mamp"/></svg></span>
        <span class="run"><svg viewBox="0 0 26 26"><rect width="26" height="26" rx="6" fill="#111"/><rect x="1" y="1" width="24" height="24" rx="5" fill="#222" stroke="#666" stroke-width=".6"/><path d="M4 6l2.500 2L4 10M8 10.500h4" stroke="#fff" fill="none"/></svg></span>
        <span class="run"><svg class="big" fill="#6a6a6a"><use href="#mamp"/></svg></span>
        <span class="run"><svg viewBox="0 0 26 26"><rect width="26" height="26" rx="6" fill="#fff"/><circle cx="13" cy="13" r="11" fill="#f5c83d"/><path d="M13 13L3.500 7.500A11 11 0 0 1 22.500 7.500L13 8z" fill="#d94a3c"/><path d="M3.500 7.500L9 16l4 1-2 7A11 11 0 0 1 3.500 7.500z" fill="#4fa75a"/><circle cx="13" cy="13" r="5.500" fill="#fff"/><circle cx="13" cy="13" r="4.300" fill="#4285ee"/></svg></span>
        <span class="run"><svg viewBox="0 0 26 26"><rect width="26" height="26" rx="6" fill="#fff"/><path d="M4 11h18v4H4z" fill="#66aef2"/></svg></span>
        <span class="run"><svg viewBox="0 0 26 26"><rect width="26" height="26" rx="6" fill="#fff"/><g stroke-width="3.200" stroke-linecap="round"><path d="M10.500 5.500v5M5.500 10.500h2" stroke="#4fc1ea"/><path d="M15.500 5.500v5M20.500 10.500h-1" stroke="#46b27f"/><path d="M15.500 15.500h5M15.500 20v.5" stroke="#e8b43c"/><path d="M10.500 15.500v5M5.500 15.500h1" stroke="#d6305f"/></g></svg></span>
        <span class="run"><svg viewBox="0 0 26 26"><rect x="1" width="24" height="26" rx="4" fill="#f2f2f2"/><path d="M2 2h22v13H2z" fill="#86a9e6"/><path d="M2 14h22v9H2z" fill="#3f5473"/><path d="M13 12h8l3 13H12z" fill="#c7c9cc"/><path d="M14 11h8v6h-8z" fill="#1d1d1d"/></svg></span>
        <span class="run"><svg viewBox="0 0 26 26"><rect width="26" height="26" rx="6" fill="#2761ea"/><text x="13" y="15.500" text-anchor="middle" font-size="8.500" font-weight="600" fill="#fff" class="glyph">zoom</text></svg></span>
        <span class="run"><svg class="big" viewBox="0 0 32 32"><rect x="1" width="30" height="32" rx="2" fill="#2e5577"/><path d="M6 5q9 0 13 9l3 6 5 3-4 0 3 6M6 5q0 6 4 10l1 11 3-5" stroke="#dce6ee" stroke-width="1.300" fill="none"/><path d="M23 4l4 5" stroke="#eee" stroke-width="2.500"/></svg></span>
      </div>
      <i class="bar"></i>
      <div class="recent">
        <span class="mini"><svg width="10" height="10" viewBox="0 0 10 10"><rect width="10" height="10" rx="2.500" fill="#fbf8ec"/><path d="M0 3q0-3 3-3h4q3 0 3 3z" fill="#f3cb48"/></svg></span>
        <span class="thumb"><svg width="34" height="26" viewBox="0 0 34 26"><path d="M0 0h30v18H0z" fill="#fbfbfb"/><path d="M9 0v18" stroke="#ddd"/><path d="M12 4h12M12 8h9M12 12h7" stroke="#aaa" stroke-dasharray="2 1"/><use href="#miniMail" x="20" y="13" width="10" height="10"/></svg></span>
        <span class="thumb"><svg width="34" height="26" viewBox="0 0 34 26"><path d="M0 0h30v18H0z" fill="#fbfbfb"/><path d="M1 1h5v2H1z" fill="#6cb85a"/><path d="M3 6h10M15 5h9M5 9h14M5 12h12" stroke="#b8c4d4" stroke-dasharray="3 1"/><use href="#miniMail" x="20" y="13" width="10" height="10"/></svg></span>
        <span class="thumb"><svg width="34" height="26" viewBox="0 0 34 26"><path d="M0 0h30v18H0z" fill="#fbfbfb"/><path d="M3 4h24M3 9h24M3 14h14" stroke="#7ba0d0" stroke-width="1.600" stroke-dasharray="2 3"/><rect x="20" y="13" width="8" height="10" rx="2" fill="#3a8cf0"/></svg></span>
        <span class="thumb"><svg width="34" height="26" viewBox="0 0 34 26"><path d="M0 0h30v18H0z" fill="#f4f2f5"/><path d="M0 0h30v2H7v16H0z" fill="#3c1b40"/><path d="M10 6h15M10 9h12M10 13h9" stroke="#999" stroke-dasharray="3 1"/><rect x="20" y="13" width="10" height="10" rx="2.500" fill="#fff"/><path d="M22.500 16h3M25 20.500h3" stroke="#d6305f" stroke-width="1.500"/><path d="M26.500 15v3" stroke="#46b27f" stroke-width="1.500"/></svg></span>
        <span class="thumb"><svg width="34" height="26" viewBox="0 0 34 26"><path d="M0 0h30v18H0z" fill="#111"/><path d="M8 5h4v3H8z" fill="#e03aa0"/><path d="M2 5h4M14 5h4M20 5h4M3 11h20" stroke="#7a6b50" stroke-width="2" stroke-dasharray="3 2"/><path d="M19 12h12v12H19z" fill="#3b12d8"/><path d="M21 17h8M21 20h6" stroke="#fff" stroke-width=".8"/></svg></span>
        <span class="trash"><svg width="22" height="32" viewBox="0 0 22 32"><path d="M1 5h20l-3 24q-7 4-14 0z" fill="#e9eaeb" fill-opacity=".85" stroke="#f5f5f5"/><path d="M2 4l4-3 4 3 4-3 5 3-4 3-5-1-4 1z" fill="#7d8184"/><path d="M7 9l1 18M14 9l-1 18" stroke="#cfd1d3"/></svg></span>
      </div>
    </div>
  </footer>
</div>
</body>
</html>
```
FILE: styles.css
```css
* { box-sizing: border-box; }
body { margin: 0; font-family: Inter, "Noto Sans CJK JP", sans-serif; color: #212529; }
.defs { position: absolute; }
.glyph { font-family: Inter, "Noto Sans CJK JP", sans-serif; }
svg { display: block; flex: none; }

.desktop { position: relative; width: 3360px; height: 2100px; overflow: hidden; display: flex; flex-direction: column; }
.wallpaper { position: absolute; inset: 0; width: 100%; height: 100%; }

/* menu bar */
.menubar { position: relative; height: 48px; background: #dadada; display: flex; align-items: center; padding-left: 40px; color: #262626; flex: none; }
.apple { width: 26px; height: 35px; margin: 0 0 4px; }
.menus { display: flex; gap: 42px; margin-left: 39px; }
.menu { font-size: 24px; line-height: 46px; white-space: nowrap; }
.menu.app { font-weight: 700; font-size: 26px; width: 101px; }
.status { position: absolute; left: 2174px; top: 0; height: 48px; display: grid; align-items: center; grid-template-columns: 72px 68px 66px 84px 72px 70px 63px 77px 82px 86px 62px 68px 65px 144px 80px; }
.date, .time { font-size: 26px; line-height: 46px; letter-spacing: .3px; white-space: nowrap; }

/* browser window */
.window { position: relative; margin-top: 2px; height: 1984px; flex: none; border-radius: 20px; overflow: hidden; background: #fff; display: flex; flex-direction: column; }
.tabstrip { height: 84px; flex: none; background: #dfe1e5; border-top: 2px solid #f2f3f5; display: flex; align-items: flex-end; }
.lights { width: 187px; height: 82px; padding: 29px 0 0 42px; display: flex; gap: 16px; }
.lights i { width: 24px; height: 24px; border-radius: 50%; }
.red { background: #ec6a5e; }
.yellow { background: #f4bf4f; }
.green { background: #61c554; }
.tab { position: relative; width: 226px; height: 68px; padding: 0 0 0 23px; display: flex; align-items: center; flex: none; }
.tab.n { width: 224px; }
.fav { width: 32px; height: 32px; }
.label { margin-left: 16px; width: 101px; font-size: 24px; line-height: 40px; letter-spacing: -.2px; color: #3c4043; white-space: nowrap; overflow: hidden; -webkit-mask-image: linear-gradient(90deg, #000 65%, transparent 100%); mask-image: linear-gradient(90deg, #000 65%, transparent 100%); }
.label.ja { font-size: 22.500px; }
.n .label { width: 99px; }
.x { width: 18px; height: 18px; margin-left: 14px; }
.tab.sep::before { content: ""; position: absolute; left: -1px; top: 15px; width: 2px; height: 40px; background: #8a8d91; }
.active { background: #fff; border-radius: 16px 16px 0 0; }
.active::before, .active::after { content: ""; position: absolute; bottom: 0; width: 16px; height: 16px; }
.active::before { left: -16px; background: radial-gradient(circle at 0 0, transparent 15.500px, #fff 16px); }
.active::after { right: -16px; background: radial-gradient(circle at 100% 0, transparent 15.500px, #fff 16px); }
.newtab { margin-left: 33px; height: 68px; display: flex; align-items: center; }
.more { margin: 0 34px 27px auto; }

.toolbar { height: 72px; flex: none; display: flex; align-items: center; padding-left: 22px; }
.tb { width: 42px; height: 42px; fill: #54585d; }
.fwd { fill: #babcbe; margin-left: 23px; }
.reload { margin-left: 22px; }
.omnibox { margin-left: 23px; width: 2801px; height: 56px; border-radius: 28px; background: #f1f3f4; display: flex; align-items: center; padding-left: 22px; }
.url { margin-left: 18px; font-size: 28px; line-height: 56px; color: #5f6368; white-space: nowrap; flex: 1; }
.url b { font-weight: 400; color: #202124; }
.omni-actions { display: grid; grid-template-columns: 64px 67px 59px 54px; align-items: center; }
.actions { margin-left: 28px; display: grid; align-items: center; grid-template-columns: 59px 71px 56px 82px 8px; }
.avatar { width: 44px; height: 44px; border-radius: 50%; background: #9b4bb3; color: #fff; font-size: 18px; line-height: 43px; text-align: center; }

.bookmarks { height: 66px; flex: none; display: grid; grid-template-columns: 146px 176px 148px 127px 63px 306px 300px 144px 64px 190px 64px 300px 302px 300px; padding: 0 0 7px 28px; border-bottom: 2px solid #dcdcdf; font-size: 23px; color: #3c4043; }
.bookmarks a { display: flex; align-items: center; gap: 16px; white-space: nowrap; line-height: 56px; }
.bookmarks .ja { font-size: 22px; }
.bi { width: 32px; height: 32px; }

/* page */
.navbar { height: 112px; background: #f5c344; padding: 2px 48px 0; display: flex; justify-content: space-between; align-items: center; font-size: 31px; letter-spacing: -.25px; color: #fae3a4; }
.nav-group { display: flex; }
.nav-group a { display: flex; align-items: center; gap: 9px; padding: 0 16px; line-height: 48px; white-space: nowrap; fill: #fae3a4; }
.container { width: 1680px; margin: 0 auto; }
.title { margin: 46px 0 0; height: 144px; display: flex; gap: 27px; justify-content: center; font-weight: 300; font-size: 139px; line-height: 148px; letter-spacing: -5.800px; fill: #212529; white-space: nowrap; }
.form { margin: 31px 0 0; padding: 0 24px; display: grid; grid-template-columns: 792px 792px; gap: 16px 48px; }
.field { height: 76px; border: 2px solid #ced4da; border-radius: 12px; padding: 0 24px; font-size: 31px; letter-spacing: -.1px; line-height: 74px; color: #6c757d; }
.wide { grid-column: span 2; }
.filled { background: #e8effd; color: #000; font-size: 26px; line-height: 78px; }
.dots { display: flex; gap: 2.200px; padding: 35px 0 0 2px; }
.dots i { width: 7px; height: 7px; border-radius: 50%; background: #000; }
.add { margin-top: 16px; height: 76px; border: 0; border-radius: 12px; background: #f5c344; font: 400 31px/76px Inter, sans-serif; color: #000; }
.table { margin-top: 96px; }
.row { display: grid; grid-template-columns: 200px 269px 233px 421px 269px 146px 142px; height: 110px; border-bottom: 2px solid #dee2e6; font-size: 31px; line-height: 50px; letter-spacing: -.2px; padding-top: 16px; }
.row > span { padding-left: 16px; white-space: nowrap; }
.head { height: 82px; background: #212529; color: #fff; font-weight: 700; font-size: 31.700px; letter-spacing: 0; }
.btn { height: 76px; border: 0; border-radius: 12px; padding: 0; display: flex; align-items: center; justify-content: center; fill: #fff; }
.edit { width: 84px; background: #f5c344; }
.del { width: 80px; background: #ca444a; }

/* dock */
.dock-zone { position: relative; height: 66px; flex: none; border-top: 2px solid #24497a; padding-top: 2px; display: flex; justify-content: center; align-items: flex-start; background: linear-gradient(rgba(0,0,0,.6), rgba(0,0,0,0)); }
.dock { width: 1551px; height: 52px; border-radius: 14px; background: #dadada; border: 1px solid #e8e8e8; box-shadow: 0 0 60px 20px rgba(0,0,0,.16); display: flex; align-items: flex-start; padding-left: 3px; }
.apps { display: grid; grid-auto-flow: column; grid-auto-columns: 36px; height: 50px; }
.apps span { position: relative; display: flex; justify-content: center; align-items: center; height: 42px; }
.apps svg { width: 26px; height: 26px; overflow: visible; }
.apps svg.big { width: 31px; height: 31px; }
.run::after { content: ""; position: absolute; left: 15px; top: 41px; width: 6px; height: 6px; border-radius: 50%; background: #5b5b5b; }
.bar { width: 2px; height: 36px; margin: 7px 8px 0; background: #a5a5a5; }
.second { margin-left: -1px; }
.recent { display: grid; grid-template-columns: 20px 36px 36px 36px 36px 36px 30px; margin-left: 17px; }
.mini { padding-top: 27px; }
.thumb { padding-top: 12px; }
.trash { padding: 6px 0 0 2px; }
```
